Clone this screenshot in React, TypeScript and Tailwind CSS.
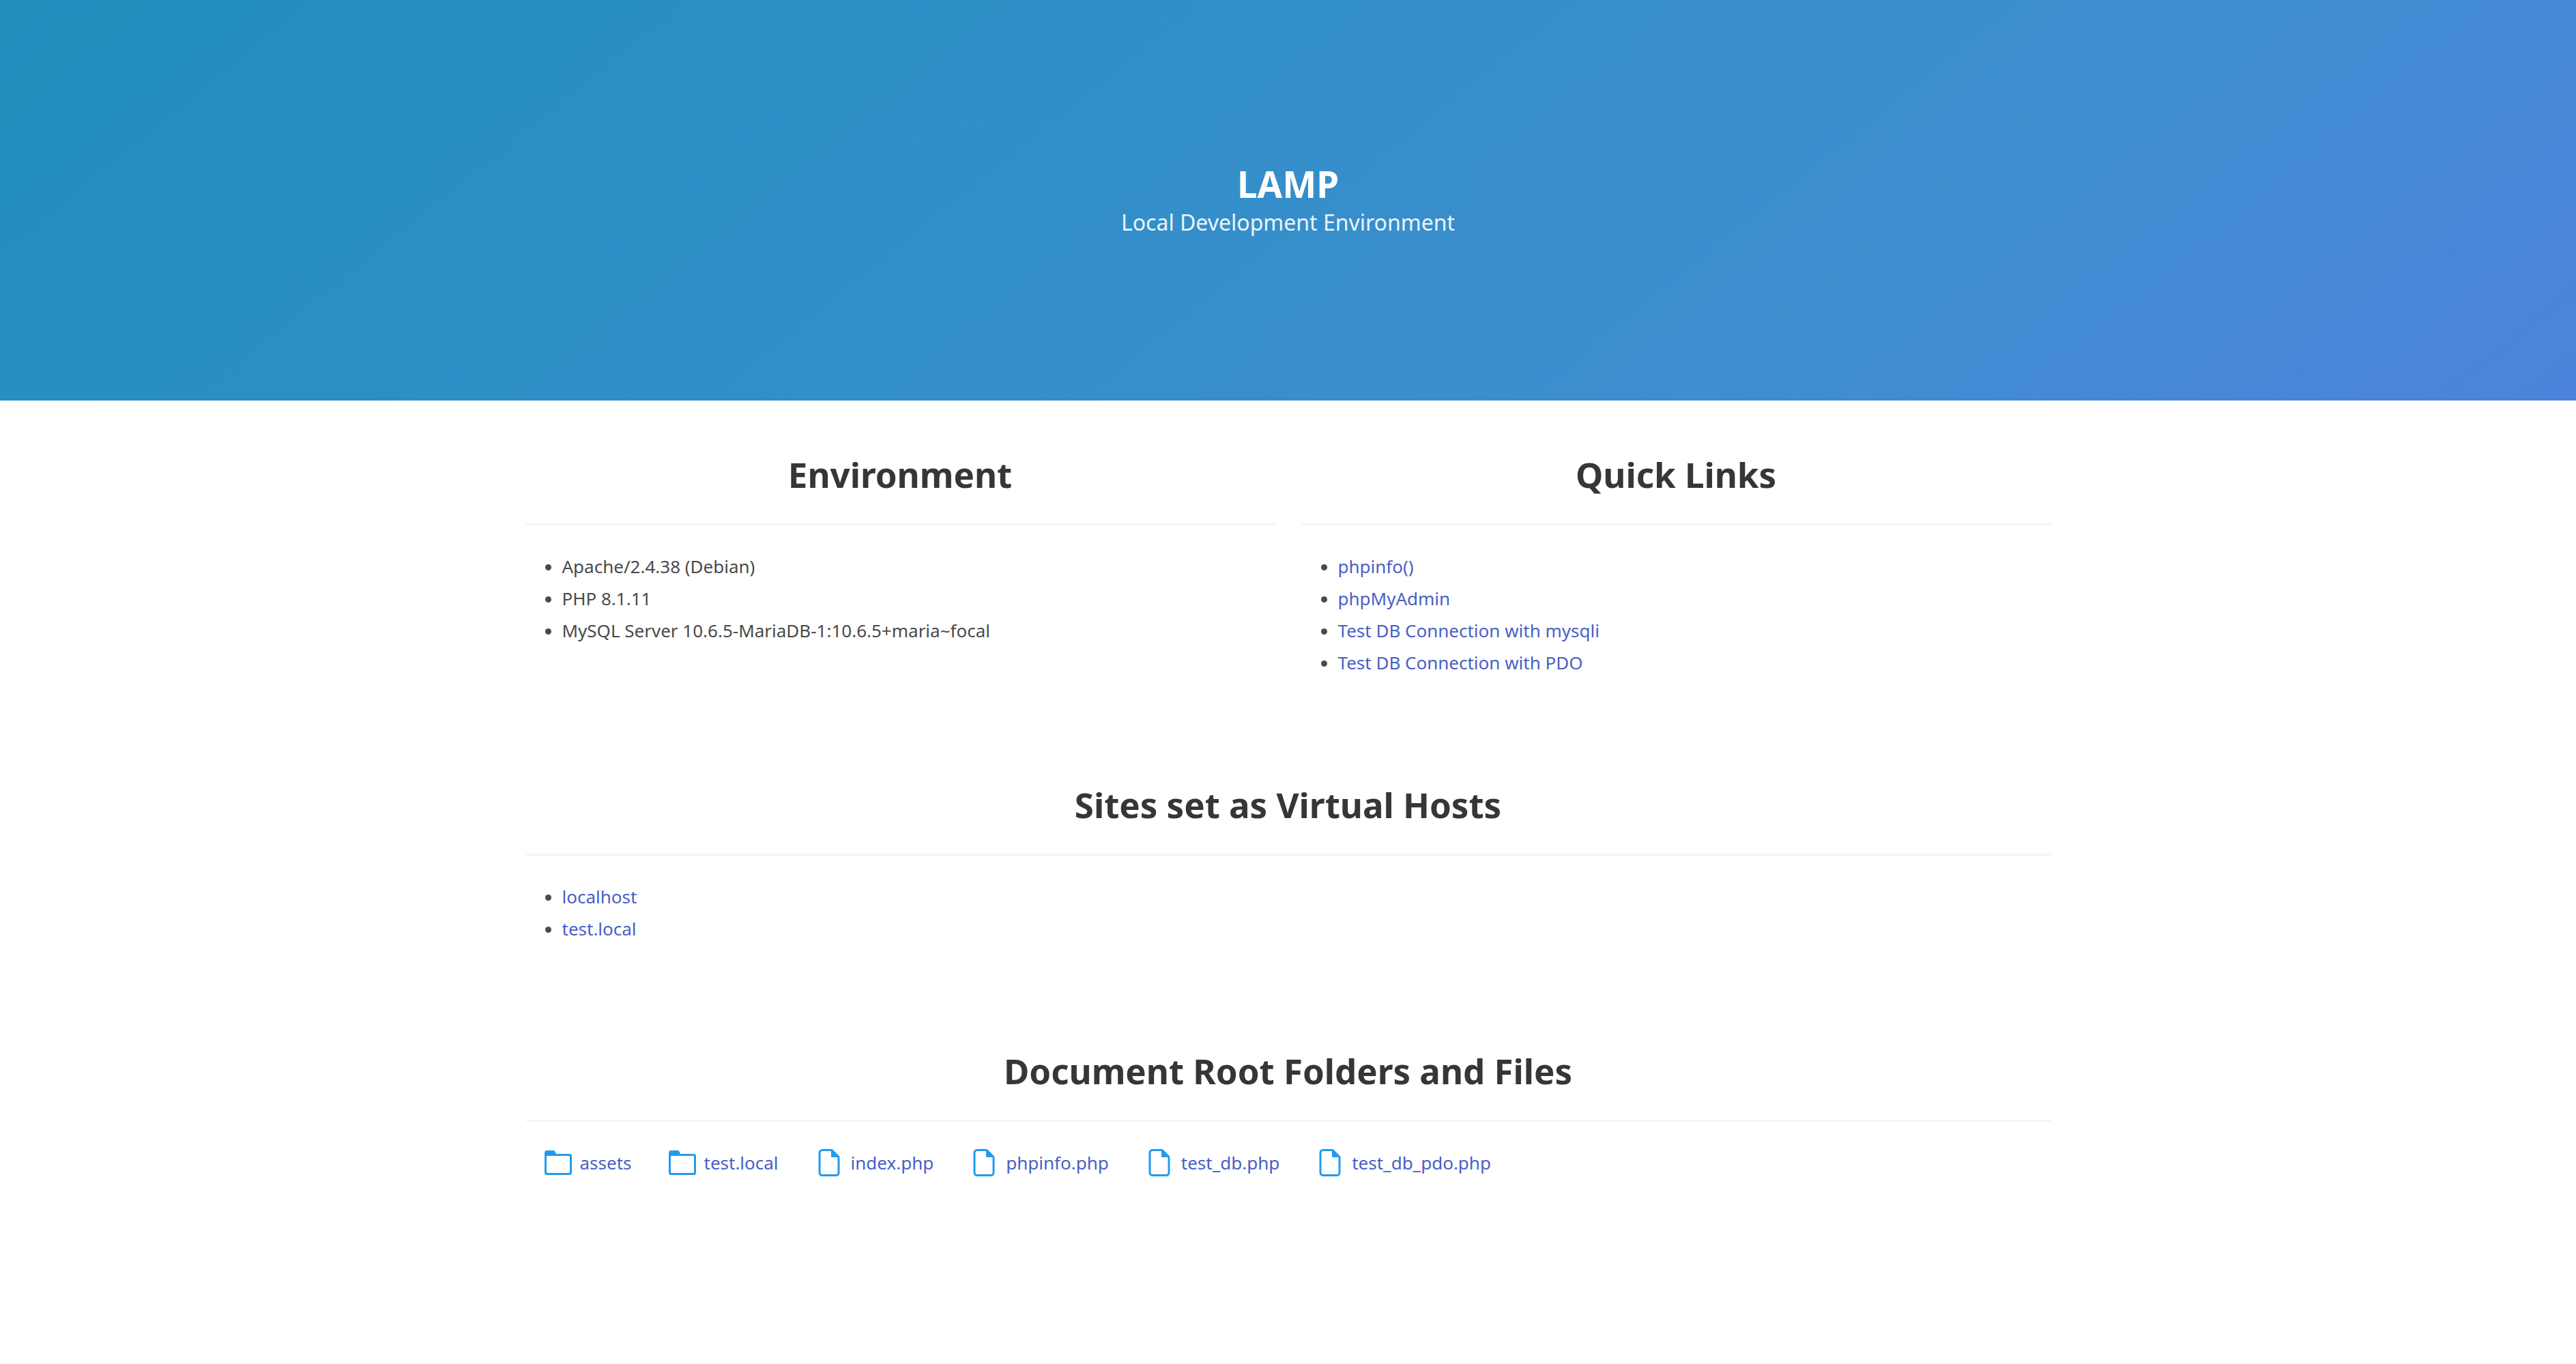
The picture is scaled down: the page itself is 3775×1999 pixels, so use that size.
import type { ReactNode } from "react";

const environment = [
  "Apache/2.4.38 (Debian)",
  "PHP 8.1.11",
  "MySQL Server 10.6.5-MariaDB-1:10.6.5+maria~focal",
];

const quickLinks = [
  { label: "phpinfo()", href: "/phpinfo.php" },
  { label: "phpMyAdmin", href: "/phpmyadmin" },
  { label: "Test DB Connection with mysqli", href: "/test_db.php" },
  { label: "Test DB Connection with PDO", href: "/test_db_pdo.php" },
];

const hosts = ["localhost", "test.local"];

const entries = [
  { name: "assets", folder: true },
  { name: "test.local", folder: true },
  { name: "index.php", folder: false },
  { name: "phpinfo.php", folder: false },
  { name: "test_db.php", folder: false },
  { name: "test_db_pdo.php", folder: false },
];

function FolderIcon() {
  return (
    <svg viewBox="0 0 40 40" className="size-10 shrink-0 text-[#209cee]" fill="currentColor" fillRule="evenodd" aria-hidden="true">
      <path d="M3.5 2H13a3 3 0 0 1 2.7 1.8L17 7h19.5A3.5 3.5 0 0 1 40 10.500v24A3.500 3.500 0 0 1 36.500 38h-33A3.500 3.500 0 0 1 0 34.500v-29A3.500 3.500 0 0 1 3.500 2ZM4 10a1 1 0 0 0-1 1v23a1 1 0 0 0 1 1h32a1 1 0 0 0 1-1V11a1 1 0 0 0-1-1Z" />
    </svg>
  );
}

function FileIcon() {
  return (
    <svg viewBox="0 0 40 40" className="size-10 shrink-0 text-[#209cee]" fill="currentColor" fillRule="evenodd" aria-hidden="true">
      <path d="M10 0h13.500a3 3 0 0 1 2.100.9l9 9a3 3 0 0 1 .9 2.100V34.500a5.500 5.500 0 0 1-5.500 5.500H10a5.500 5.500 0 0 1-5.500-5.500v-29A5.500 5.500 0 0 1 10 0ZM10 3a2.500 2.500 0 0 0-2.500 2.500v29A2.500 2.500 0 0 0 10 37h20a2.500 2.500 0 0 0 2.500-2.500V12h-8a1.500 1.500 0 0 1-1.500-1.500V3Z" />
    </svg>
  );
}

function Panel({ title, children }: { title: string; children: ReactNode }) {
  return (
    <section className="min-w-0 flex-1">
      <h2 className="text-center text-[51px] leading-14 font-bold text-[#363636]">{title}</h2>
      <hr className="mt-11 mb-10 h-[3px] border-0 bg-[#f5f5f5]" />
      {children}
    </section>
  );
}

function BulletList({ children }: { children: ReactNode }) {
  return <ul className="ml-[53px] flex list-disc flex-col gap-[7px]">{children}</ul>;
}

function Link({ href, children }: { href: string; children: ReactNode }) {
  return (
    <a href={href} className="text-[#485fc7] hover:text-[#363636]">
      {children}
    </a>
  );
}

export default function App() {
  return (
    <div className="min-h-screen bg-white font-['Noto_Sans','Open_Sans',sans-serif] text-[26px] leading-10 text-[#4a4a4a]">
      <header className="bg-[linear-gradient(141deg,#208fbc_0%,#3e8ed0_71%,#4d83db_100%)] px-10 py-60 text-center">
        <h1 className="text-[53px] leading-[60px] font-bold text-white">LAMP</h1>
        <p className="mt-[5px] text-[32px] leading-[42px] text-white/90">Local Development Environment</p>
      </header>
      <main className="mx-auto flex max-w-[2234px] flex-col gap-40 py-20">
        <div className="flex flex-col gap-10 md:flex-row">
          <Panel title="Environment">
            <BulletList>
              {environment.map((item) => (
                <li key={item}>{item}</li>
              ))}
            </BulletList>
          </Panel>
          <Panel title="Quick Links">
            <BulletList>
              {quickLinks.map((link) => (
                <li key={link.label}>
                  <Link href={link.href}>{link.label}</Link>
                </li>
              ))}
            </BulletList>
          </Panel>
        </div>
        <Panel title="Sites set as Virtual Hosts">
          <BulletList>
            {hosts.map((host) => (
              <li key={host}>
                <Link href={"http://" + host}>{host}</Link>
              </li>
            ))}
          </BulletList>
        </Panel>
        <Panel title="Document Root Folders and Files">
          <ul className="flex flex-wrap gap-x-[54px] gap-y-5 px-[27px]">
            {entries.map((entry) => (
              <li key={entry.name}>
                <a href={"/" + entry.name} className="flex items-center gap-3 text-[#485fc7] hover:text-[#363636]">
                  {entry.folder ? <FolderIcon /> : <FileIcon />}
                  <span>{entry.name}</span>
                </a>
              </li>
            ))}
          </ul>
        </Panel>
      </main>
    </div>
  );
}
